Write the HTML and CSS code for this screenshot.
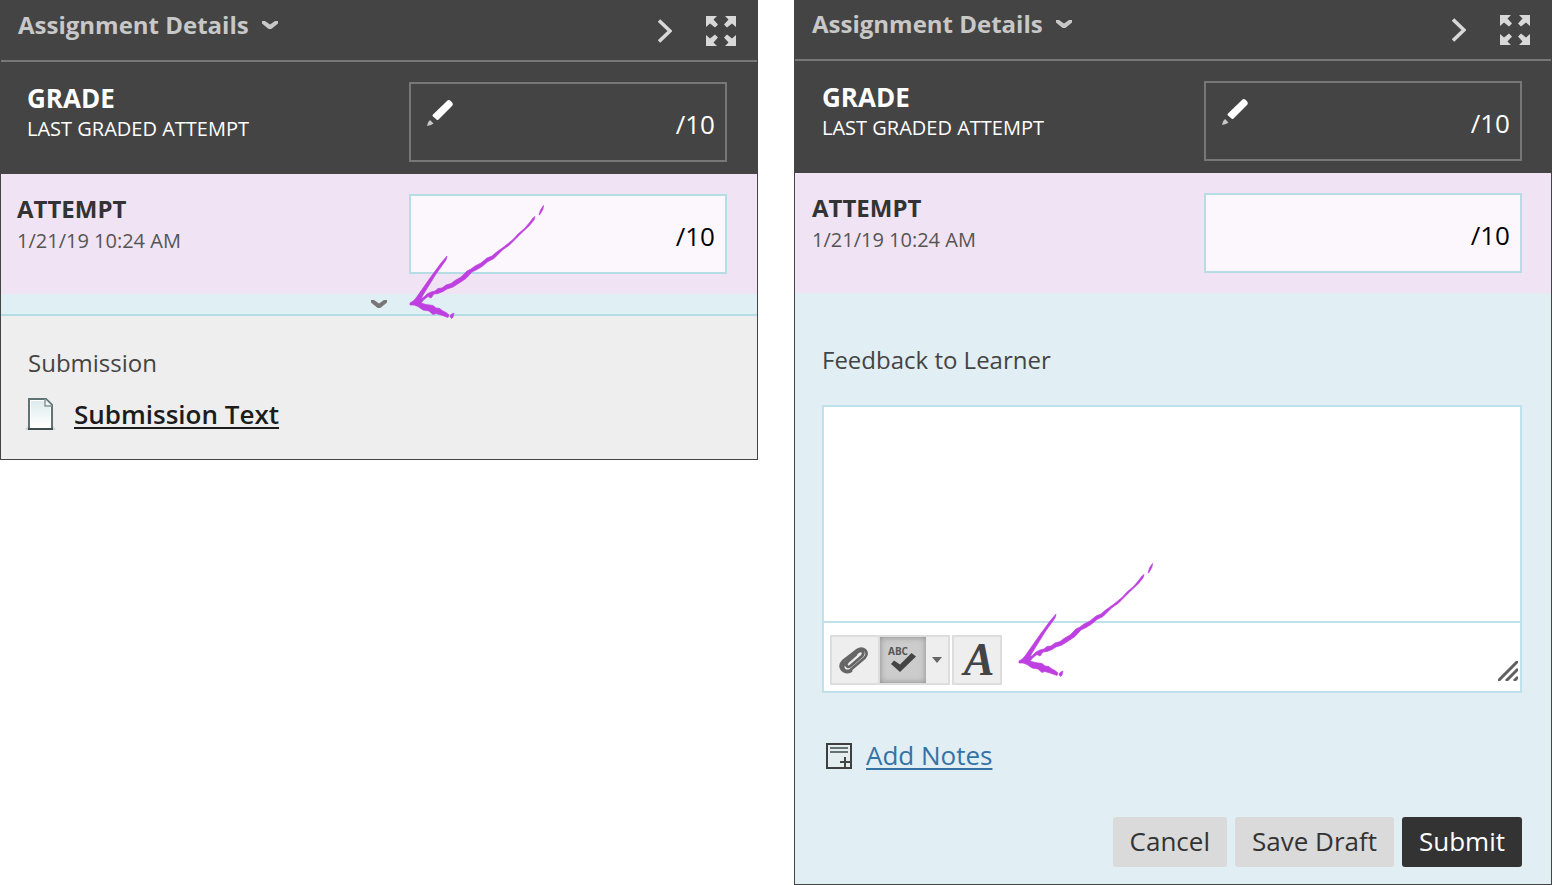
FILE: index.html
```html
<!DOCTYPE html>
<html lang="en">
<head>
<meta charset="utf-8">
<title>Assignment Details</title>
<link rel="stylesheet" href="styles.css">
</head>
<body>
<svg class="sprite" aria-hidden="true">
  <symbol id="chevron-down" viewBox="0 0 16 8"><path d="M0 0H3L8 3.500L13 0H16V2.500L10 7.500Q8 8.500 6 7.500L0 2.500Z" fill="currentColor"/></symbol>
  <symbol id="chevron-right" viewBox="0 0 14 24"><path d="M1 1.500L12 12L1 22.500" fill="none" stroke="currentColor" stroke-width="3.600"/></symbol>
  <symbol id="expand" viewBox="0 0 30 30"><path d="M0 0H11L7.500 3.500L12 8.500L9 11.500L4 7.500L0 11ZM30 0V11L26 7.500L21 11.500L18 8.500L22.500 3.500L19 0ZM0 30V19L4 22.500L9 18.500L12 21.500L7.500 26.500L11 30ZM30 30H19L22.500 26.500L18 21.500L21 18.500L26 22.500L30 19Z" fill="currentColor"/></symbol>
  <symbol id="pencil" viewBox="0 0 26 26"><path d="M20.500 0.500Q22 -0.500 23.500 0.800L25.200 2.500Q26.500 4.500 25 6L11.500 19.500Q10.500 20.500 9.500 19.500L6 16.500Q5 15.500 6 14.500Z" fill="currentColor"/><path d="M3 20L6.500 23.500L4 25L0 26L1 22.500Z" fill="currentColor" opacity=".7"/></symbol>
  <symbol id="hand-arrow" viewBox="0 0 145 122"><g fill="#bf40e0" stroke="#bf40e0" stroke-width=".7" stroke-linejoin="round">
    <path d="M5 102Q9 100 11 97L25 77L36 62L42 55L41 59L31 73L18 94L16 98L19 96L22 93L26 91L30 90L33 87.500L37 87L41 84L46 82.500L50 79.500L56 76L62 70L66 68L70 65L76 62L82 57L87 55L91 51.500L100 45L108 38.500L113 33L120 27L125 21L128 17L130 15.500L129 19L124 25L117 31.500L111 37.500L104 44.500L98 48.500L93 53.500L89 57.500L83 60.500L77 65.500L72 68.500L67 71L61 77.500L55 81.500L48 86L42 88L38 90.500L33 92.500L29 93L26 97L23 95.500L19 98.500L16 102L21 103.500L28 104.500L31 107L35 107.500L37 109.500L41 111.500L44 114L43 116.500L36 114L31 112.500L28 113.500L24 110L18 109L13 105.500L9 104L5 104Z"/>
    <path d="M134 14L135.500 9L138.500 4.500L138 8L135 13.500Z"/>
    <path d="M46 113.500L49 112L48 116L46.500 117.500L45 115.500Z"/></g></symbol>
</svg>

<main class="board">
  <section class="panel">
    <header class="panel-head">
      <h2 class="title"><button class="title-button" type="button">Assignment Details <svg class="chevron"><use href="#chevron-down"/></svg></button></h2>
      <div class="head-tools">
        <button class="icon-button" type="button" aria-label="Collapse"><svg class="next"><use href="#chevron-right"/></svg></button>
        <button class="icon-button" type="button" aria-label="Full screen"><svg class="expand"><use href="#expand"/></svg></button>
      </div>
    </header>
    <div class="row grade">
      <div class="row-text"><h3 class="grade-title">GRADE</h3><p class="detail">LAST GRADED ATTEMPT</p></div>
      <div class="score score-dark">
        <button class="icon-button edit" type="button" aria-label="Edit grade"><svg class="pencil"><use href="#pencil"/></svg></button>
        <span class="points">/10</span>
      </div>
    </div>
    <div class="row attempt">
      <div class="row-text"><h3 class="attempt-title">ATTEMPT</h3><p class="detail">1/21/19 10:24 AM</p></div>
      <label class="score score-light"><input class="score-input" type="text" aria-label="Attempt score"><span class="points">/10</span></label>
    </div>
    <button class="strip" type="button" aria-label="Show feedback"><svg class="chevron"><use href="#chevron-down"/></svg></button>
    <div class="submission">
      <h3 class="section-title">Submission</h3>
      <div class="file">
        <svg class="page" viewBox="0 0 32 32" aria-hidden="true"><defs><linearGradient id="sheet" x2="0" y2="1"><stop offset="0" stop-color="#dcebec"/><stop offset="1" stop-color="#fff"/></linearGradient></defs><path d="M0 32L3 28H28L31 32Z" fill="#d2d4d4"/><path d="M4 1H21L27 7V31H4Z" fill="#fff" stroke="#5f7374" stroke-width="2"/><path d="M6 3H19V9H25V29H6Z" fill="url(#sheet)"/><path d="M20 1V8H27" fill="#eef5f5" stroke="#849293" stroke-width="1.500"/><path d="M3 31H28" stroke="#3c4d4d" stroke-width="2"/></svg>
        <a class="file-link" href="#submission">Submission Text</a>
      </div>
    </div>
    <svg class="pointer pointer-strip" aria-hidden="true"><use href="#hand-arrow"/></svg>
  </section>

  <section class="panel panel-open">
    <header class="panel-head">
      <h2 class="title"><button class="title-button" type="button">Assignment Details <svg class="chevron"><use href="#chevron-down"/></svg></button></h2>
      <div class="head-tools">
        <button class="icon-button" type="button" aria-label="Collapse"><svg class="next"><use href="#chevron-right"/></svg></button>
        <button class="icon-button" type="button" aria-label="Full screen"><svg class="expand"><use href="#expand"/></svg></button>
      </div>
    </header>
    <div class="row grade">
      <div class="row-text"><h3 class="grade-title">GRADE</h3><p class="detail">LAST GRADED ATTEMPT</p></div>
      <div class="score score-dark">
        <button class="icon-button edit" type="button" aria-label="Edit grade"><svg class="pencil"><use href="#pencil"/></svg></button>
        <span class="points">/10</span>
      </div>
    </div>
    <div class="row attempt">
      <div class="row-text"><h3 class="attempt-title">ATTEMPT</h3><p class="detail">1/21/19 10:24 AM</p></div>
      <label class="score score-light"><input class="score-input" type="text" aria-label="Attempt score"><span class="points">/10</span></label>
    </div>
    <form class="feedback">
      <label class="section-title" for="feedback">Feedback to Learner</label>
      <div class="editor">
        <textarea class="editor-text" id="feedback"></textarea>
        <div class="toolbar">
          <div class="tool-group">
            <button class="tool tool-clip" type="button" aria-label="Attach file"><svg class="clip" viewBox="0 0 32 28"><g fill="none" stroke-linecap="round" stroke-linejoin="round"><path d="M18 8.500L9.500 16C6.500 19.500 10 22.500 13 19.500L24 10C27 6.500 23.500 3 20 6L7.500 16.500C2 21.500 7.500 28 13 23.500L26.500 12C32 6.500 25.500 -0.500 18.500 4.500L5.500 14.500C-1 21 5.500 29 13 25" stroke="#666" stroke-width="2.800"/></g></svg></button>
            <button class="tool tool-pressed" type="button" aria-label="Check spelling" aria-pressed="true"><svg class="spell" viewBox="0 0 46 46"><text class="spell-text" x="8" y="18">ABC</text><path d="M11 27L14 23.500L20 27.500L31.500 16L36 19.500L20 35Z" fill="#444"/></svg></button>
            <button class="tool tool-menu" type="button" aria-label="Spelling options"><svg class="caret" viewBox="0 0 10 6"><path d="M0 0H10L5 6Z" fill="#666"/></svg></button>
          </div>
          <button class="tool tool-style" type="button" aria-label="Text style">A</button>
          <svg class="grip" viewBox="0 0 20 20" aria-hidden="true"><path d="M0 20L20 0M8 20L20 8M16 20L20 16" stroke="#606060" stroke-width="3"/></svg>
          <svg class="pointer pointer-style" aria-hidden="true"><use href="#hand-arrow"/></svg>
        </div>
      </div>
      <div class="notes">
        <svg class="note" viewBox="0 0 26 26" aria-hidden="true"><path d="M1 1H25V25H1Z" fill="#e4eeef" stroke="#3f3f3f" stroke-width="2"/><path d="M4 5H22M4 9H22" stroke="#667272" stroke-width="2"/><path d="M14 19H26M19 14V25" stroke="#444" stroke-width="2"/></svg>
        <a class="notes-link" href="#notes">Add Notes</a>
      </div>
      <div class="actions">
        <button class="button" type="button">Cancel</button>
        <button class="button" type="button">Save Draft</button>
        <button class="button button-main" type="submit">Submit</button>
      </div>
    </form>
  </section>
</main>
</body>
</html>
```
FILE: styles.css
```css
* { box-sizing: border-box; }
body { margin: 0; background: #fff; color: #444; font-family: "Open Sans", "Noto Sans", sans-serif; font-size: 24px; line-height: 32px; }
h2, h3, p { margin: 0; }
button, input, textarea { font: inherit; color: inherit; border: 0; padding: 0; background: none; }
button { cursor: pointer; }
svg { display: block; flex: none; }
.sprite { position: absolute; width: 0; height: 0; }
.board { display: grid; grid-template-columns: 1fr 1fr; gap: 36px; align-items: start; padding-right: 2px; }
.panel { position: relative; border: 1px solid #444; }
.panel-open { border-top: 0; }

.panel-head { display: flex; justify-content: space-between; height: 61px; padding: 8px 21px 0 17px; background: #444; border-bottom: 2px solid #777; color: #c8c8c8; }
.title { font-size: 24px; font-weight: 700; }
.title-button { display: flex; align-items: center; gap: 13px; }
.head-tools { display: flex; align-items: center; gap: 34px; height: 44px; color: #d8d8d8; }
.chevron { width: 16px; height: 8px; }
.next { width: 14px; height: 24px; }
.expand { width: 30px; height: 30px; }

.row { display: grid; grid-template-columns: minmax(0, 1fr) 318px; align-items: start; padding: 20px 30px 0 16px; }
.panel-open .row { padding-right: 29px; padding-left: 17px; }
.grade { height: 112px; background: #444; color: #fff; }
.grade .row-text { padding-left: 10px; }
.attempt { height: 120px; background: #f0e4f4; color: #555; }
.grade-title { font-size: 26px; line-height: 32px; }
.attempt-title { font-size: 24px; line-height: 30px; color: #333; }
.detail { font-size: 20px; line-height: 30px; }
.attempt .detail { line-height: 34px; }
.score { display: flex; justify-content: space-between; height: 80px; border: 2px solid #777; padding: 16px 10px 0 16px; }
.score-light { border-color: #b5dde6; background: #fbf7fd; color: #000; }
.score-input { flex: 1; min-width: 0; outline: 0; }
.points { padding-top: 8px; font-size: 26px; line-height: 32px; }
.edit { align-self: flex-start; }
.pencil { width: 26px; height: 26px; }

.strip { display: flex; justify-content: center; align-items: center; width: 100%; height: 22px; background: #e0eff4; border-bottom: 2px solid #b5dde6; color: #777; }
.submission { padding: 30px 24px 28px; background: #eee; }
.section-title { font-size: 24px; font-weight: 400; line-height: 34px; color: #444; }
.submission .section-title { padding-left: 3px; }
.file { display: flex; align-items: center; gap: 17px; padding-top: 17px; }
.page { width: 32px; height: 32px; }
.file-link { color: #1c1c1c; font-size: 26px; font-weight: 600; line-height: 34px; text-underline-offset: 3px; text-decoration-thickness: 2px; }

.feedback { display: flex; flex-direction: column; padding: 50px 29px 17px 27px; background: #e1eef3; }
.editor { margin-top: 28px; background: #fff; border: 2px solid #bfe1e9; }
.editor-text { display: block; width: 100%; height: 214px; padding: 10px; resize: none; outline: 0; }
.toolbar { position: relative; display: flex; align-items: flex-start; gap: 2px; height: 70px; padding: 12px 2px 0 6px; border-top: 2px solid #bfe1e9; }
.tool-group { display: flex; border: 2px solid #ddd; background: #eee; }
.tool { display: flex; align-items: center; justify-content: center; width: 48px; height: 46px; color: #444; }
.tool-clip { width: 48px; padding-right: 2px; border-right: 2px solid #ddd; }
.tool-pressed { width: 46px; background: #ccc; box-shadow: inset 0 0 6px #888; }
.tool-menu { width: 22px; }
.tool-style { width: 50px; height: 50px; padding-left: 4px; border: 2px solid #ddd; background: #eee; font-family: "Liberation Serif", serif; font-size: 46px; font-weight: 700; font-style: italic; line-height: 46px; }
.clip { width: 32px; height: 28px; }
.spell { width: 46px; height: 46px; }
.spell-text { font-size: 10px; font-weight: 700; fill: #555; }
.caret { width: 10px; height: 6px; }
.grip { width: 20px; height: 20px; margin: 26px 0 0 auto; }
.notes { display: flex; align-items: center; gap: 14px; padding: 46px 0 0 4px; }
.note { width: 26px; height: 26px; }
.notes-link { padding-bottom: 2px; color: #3572a5; font-size: 26px; line-height: 32px; text-underline-offset: 3px; text-decoration-thickness: 2px; }
.actions { display: flex; justify-content: flex-end; gap: 8px; padding-top: 44px; }
.button { height: 50px; padding: 0 17px 2px; border-radius: 3px; background: #dadada; color: #333; font-size: 26px; }
.button-main { background: #333; color: #fff; }

.pointer { position: absolute; width: 145px; height: 122px; pointer-events: none; }
.pointer-strip { left: 404px; top: 200px; }
.pointer-style { left: 190px; top: -64px; }
```
